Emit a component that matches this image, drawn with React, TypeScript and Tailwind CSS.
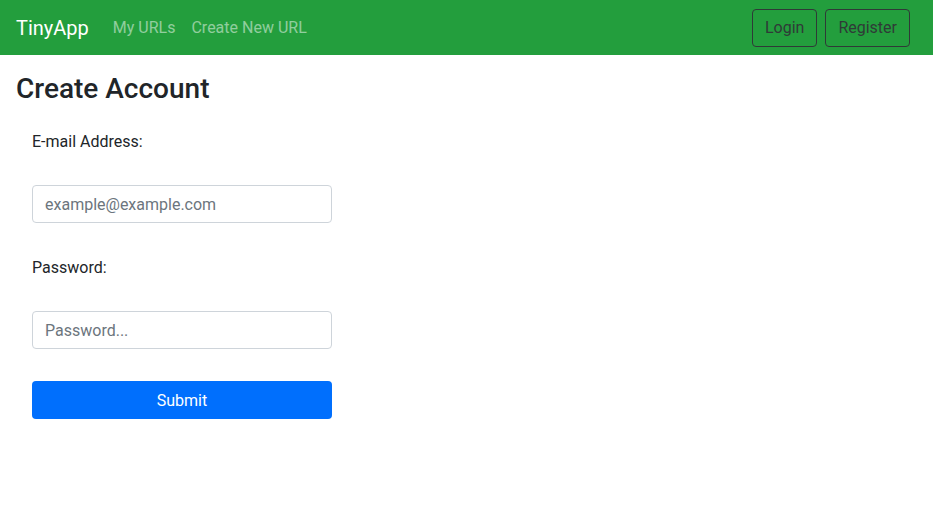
export default function App() {
  return (
    <div className="min-h-screen bg-white font-['Roboto','Liberation_Sans',sans-serif] text-[#212529]">
      <nav className="flex h-[55px] items-center bg-[#239e3d] pt-px pl-4 pr-[23px]">
        <a className="mr-4 text-[20px] leading-[30px] text-white">TinyApp</a>
        <a className="px-2 text-base text-white/50">My URLs</a>
        <a className="px-2 text-base text-white/50">Create New URL</a>
        <div className="ml-auto -mt-px flex gap-2">
          <button className="h-[38px] rounded border border-[#2f3a37] px-3 pt-px text-base text-[#2f3a37]">Login</button>
          <button className="h-[38px] rounded border border-[#2f3a37] px-3 pt-px text-base text-[#2f3a37]">Register</button>
        </div>
      </nav>
      <main className="px-4">
        <h3 className="mt-[17px] text-[28px] font-medium leading-[34px]">Create Account</h3>
        <form className="flex w-[332px] flex-col gap-8 px-4 pt-[23px]">
          <label className="-mb-px pt-px text-base leading-6">E-mail Address:</label>
          <input
            type="text"
            placeholder="example@example.com"
            className="h-[38px] w-[300px] rounded border border-[#ced4da] px-3 text-base placeholder:text-[#6c757d]"
          />
          <label className="-mb-px pt-px text-base leading-6">Password:</label>
          <input
            type="password"
            placeholder="Password..."
            className="h-[38px] w-[300px] rounded border border-[#ced4da] px-3 text-base placeholder:text-[#6c757d]"
          />
          <button type="button" className="h-[38px] w-[300px] rounded bg-[#006ffd] pt-px text-base text-white">
            Submit
          </button>
        </form>
      </main>
    </div>
  );
}
